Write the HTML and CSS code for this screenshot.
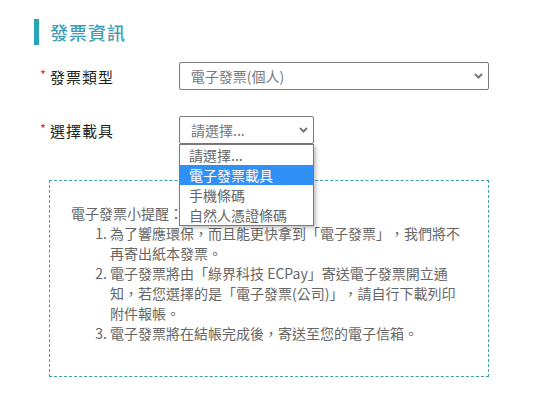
FILE: index.html
```html
<!DOCTYPE html>
<html lang="zh-Hant">
<head>
    <meta charset="UTF-8">
    <meta name="viewport" content="width=device-width, initial-scale=1.0">
    <title>發票資訊</title>
    <link rel="stylesheet" href="styles.css">
</head>
<body>
    <div class="section">
        <h2 class="section-title">發票資訊</h2>

        <div class="form-row">
            <label class="form-label"><span class="required">*</span>發票類型</label>
            <div class="select select-wide">
                <span class="select-value">電子發票(個人)</span>
                <svg class="chevron" width="9" height="6" viewBox="0 0 9 6"><path d="M1 1 L4.5 4.5 L8 1" fill="none" stroke="#777" stroke-width="2"/></svg>
            </div>
        </div>

        <div class="form-row carrier-row">
            <label class="form-label"><span class="required">*</span>選擇載具</label>
            <div class="select select-narrow">
                <span class="select-value">請選擇...</span>
                <svg class="chevron" width="9" height="6" viewBox="0 0 9 6"><path d="M1 1 L4.5 4.5 L8 1" fill="none" stroke="#777" stroke-width="2"/></svg>

                <ul class="dropdown">
                    <li>請選擇...</li>
                    <li class="active">電子發票載具</li>
                    <li>手機條碼</li>
                    <li>自然人憑證條碼</li>
                </ul>
            </div>
        </div>

        <div class="notice">
            <p class="notice-title">電子發票小提醒：</p>
            <ol class="notice-list">
                <li>為了響應環保，而且能更快拿到「電子發票」，我們將不再寄出紙本發票。</li>
                <li>電子發票將由「綠界科技 ECPay」寄送電子發票開立通知，若您選擇的是「電子發票(公司)」，請自行下載列印附件報帳。</li>
                <li>電子發票將在結帳完成後，寄送至您的電子信箱。</li>
            </ol>
        </div>
    </div>
</body>
</html>
```

FILE: styles.css
```css
body {
    margin: 0;
    background-color: #fff;
    font-family: "Noto Sans CJK TC", "Noto Sans", sans-serif;
    color: #222;
    text-spacing-trim: space-all;
}

.section {
    padding: 19px 0 0 34px;
    width: 455px;
}

.section-title {
    margin: 0;
    height: 26px;
    line-height: 26px;
    border-left: 5px solid #2aa5b8;
    padding-left: 11px;
    font-size: 18px;
    font-weight: 500;
    letter-spacing: 1px;
    color: #3f9cb6;
}

.form-row {
    display: flex;
    align-items: center;
    margin-top: 17px;
}

.carrier-row {
    margin-top: 26px;
}

.form-label {
    width: 139px;
    padding-left: 6px;
    font-size: 15px;
    line-height: 20px;
    letter-spacing: 1px;
    color: #222;
}

.required {
    display: inline-block;
    width: 10px;
    color: #e0353d;
    font-size: 13px;
    vertical-align: 3px;
}

.select {
    position: relative;
    display: flex;
    align-items: center;
    justify-content: space-between;
    height: 26px;
    border: 1px solid #7a7a7a;
    border-radius: 2px;
    padding: 0 5px 0 11px;
    background-color: #fff;
}

.select-wide {
    width: 293px;
}

.select-narrow {
    width: 117px;
}

.select-value {
    font-size: 14px;
    line-height: 20px;
    color: #777;
}

.chevron {
    display: block;
}

.dropdown {
    position: absolute;
    top: 100%;
    left: -1px;
    width: 133px;
    margin: 1px 0 0 0;
    padding: 0;
    list-style: none;
    background-color: #fff;
    border: 1px solid #7a7a7a;
    box-shadow: 2px 2px 4px rgba(0, 0, 0, 0.25);
    z-index: 2;
}

.dropdown li {
    height: 20px;
    line-height: 20px;
    padding-left: 9px;
    font-size: 14px;
    color: #666;
}

.dropdown li.active {
    background-color: #3190f5;
    color: #fff;
}

.notice {
    margin: 36px 0 0 15px;
    width: 394px;
    border: 1px dashed #3fa0ad;
    padding: 22px 23px 33px 21px;
    font-size: 14px;
    line-height: 20px;
    color: #666;
}

.notice-title {
    margin: 0;
}

.notice-list {
    margin: 0;
    padding-left: 39px;
}
```
